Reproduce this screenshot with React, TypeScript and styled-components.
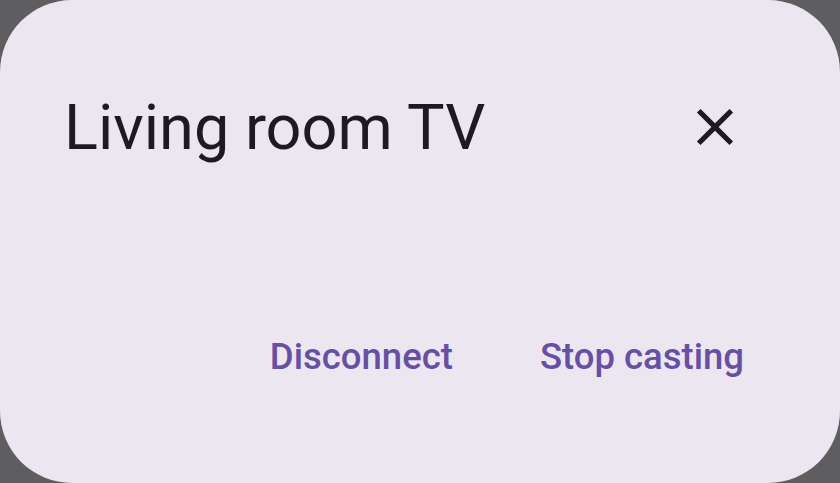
import React from "react";
import styled, { createGlobalStyle } from "styled-components";

const Global = createGlobalStyle`
  html, body { margin: 0; padding: 0; background: #5e5d60; }
  body { font-family: Roboto, "Noto Sans", sans-serif; }
`;

const Screen = styled.div`
  width: 840px;
  height: 483px;
  background: #5e5d60;
`;

const Dialog = styled.div`
  width: 840px;
  height: 483px;
  box-sizing: border-box;
  background: #ece6f0;
  border-radius: 72px;
  display: flex;
  flex-direction: column;
  padding: 95px 94px 0 64px;
`;

const Header = styled.div`
  display: flex;
  align-items: center;
  justify-content: space-between;
`;

const Title = styled.h1`
  margin: 0;
  font-family: Roboto, sans-serif;
  font-weight: 400;
  font-size: 63px;
  line-height: 66px;
  color: #1d1b20;
  letter-spacing: 0;
`;

const CloseButton = styled.button`
  border: none;
  background: none;
  padding: 0;
  margin-top: -2px;
  width: 62px;
  height: 62px;
  display: flex;
  align-items: center;
  justify-content: center;
  color: #1d1b20;
  cursor: pointer;
`;

const Actions = styled.div`
  margin-top: auto;
  margin-bottom: 107px;
  margin-right: -3px;
  padding-right: 5px;
  display: flex;
  justify-content: flex-end;
  gap: 87px;
`;

const TextButton = styled.button`
  border: none;
  background: none;
  padding: 0;
  font-family: Roboto, sans-serif;
  font-weight: 500;
  font-size: 36.5px;
  line-height: 38px;
  color: #6750a4;
  cursor: pointer;
`;

export default function App() {
  return (
    <>
      <Global />
      <Screen>
        <Dialog>
          <Header>
            <Title>Living room TV</Title>
            <CloseButton aria-label="Close">
              <svg width="62" height="62" viewBox="0 0 24 24" fill="currentColor">
                <path d="M19 6.41L17.59 5 12 10.59 6.41 5 5 6.41 10.59 12 5 17.59 6.41 19 12 13.41 17.59 19 19 17.59 13.41 12z" />
              </svg>
            </CloseButton>
          </Header>
          <Actions>
            <TextButton>Disconnect</TextButton>
            <TextButton>Stop casting</TextButton>
          </Actions>
        </Dialog>
      </Screen>
    </>
  );
}
